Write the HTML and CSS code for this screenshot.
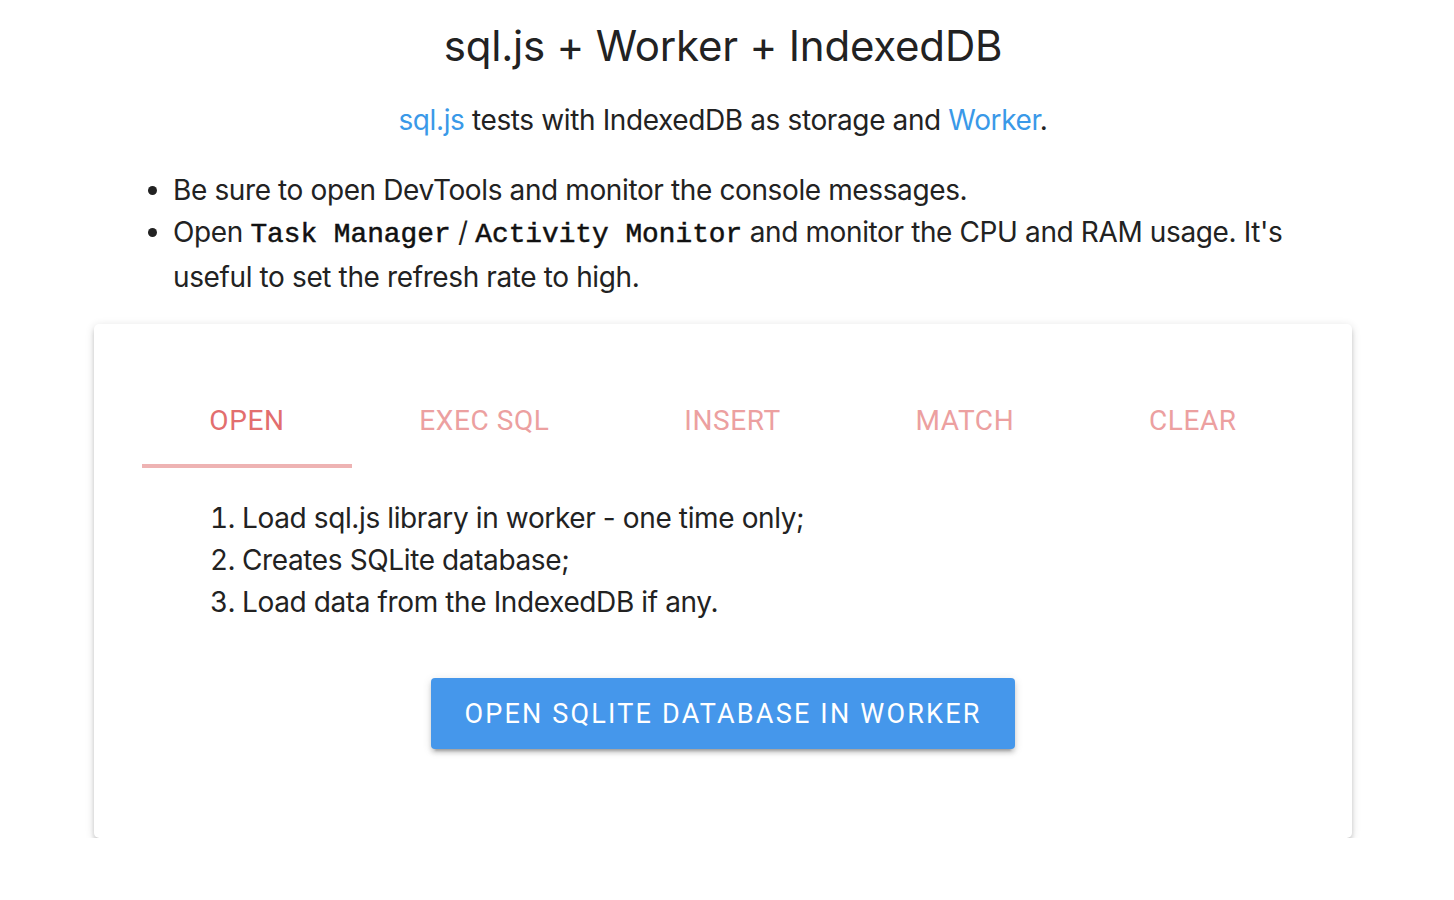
FILE: index.html
```html
<!DOCTYPE html>
<html lang="en">
<head>
<meta charset="utf-8">
<title>sql.js + Worker + IndexedDB</title>
<link rel="stylesheet" href="styles.css">
</head>
<body>
<div class="page">
  <h1 class="title">sql.js + Worker + IndexedDB</h1>
  <p class="subtitle"><a href="#" class="link">sql.js</a> tests with IndexedDB as storage and <a href="#" class="link">Worker</a>.</p>
  <ul class="notes">
    <li>Be sure to open DevTools and monitor the console messages.</li>
    <li>Open <code>Task Manager</code> / <code>Activity Monitor</code> and monitor the CPU and RAM usage. It's useful to set the refresh rate to high.</li>
  </ul>
  <div class="card">
    <div class="tabs">
      <div class="tab active">Open</div>
      <div class="tab">Exec SQL</div>
      <div class="tab">Insert</div>
      <div class="tab">Match</div>
      <div class="tab">Clear</div>
    </div>
    <div class="tab-body">
      <ol class="steps">
        <li>Load sql.js library in worker - one time only;</li>
        <li>Creates SQLite database;</li>
        <li>Load data from the IndexedDB if any.</li>
      </ol>
      <div class="actions">
        <button class="btn">Open SQLite database in worker</button>
      </div>
    </div>
  </div>
</div>
</body>
</html>
```

FILE: styles.css
```css
* { box-sizing: border-box; }
html, body { margin: 0; padding: 0; background: #fff; }
body {
  font-family: Inter, "Noto Sans", "Liberation Sans", sans-serif;
  color: #222;
  font-size: 28px;
  line-height: 42px;
  letter-spacing: -0.38px;
}
.page {
  margin: 0 102px 0 94px;
  padding-top: 20px;
}
.title {
  margin: 0;
  text-align: center;
  font-weight: 400;
  font-size: 42px;
  line-height: 52px;
  letter-spacing: -0.2px;
}
.subtitle {
  margin: 27px 0 0;
  text-align: center;
}
.link { color: #3a99e8; text-decoration: none; }
.notes {
  margin: 28px 0 0;
  padding: 0 30px 0 79px;
}
.notes li { line-height: 42px; }
code {
  font-family: "Liberation Mono", monospace;
  font-size: 27.8px;
  font-weight: 400;
  letter-spacing: 0;
  color: #111;
  -webkit-text-stroke: 0.5px #111;
}
.card {
  margin-top: 26px;
  background: #fff;
  border-radius: 5px;
  padding: 48px;
  box-shadow: 0 6px 2px -4px rgba(0,0,0,.2), 0 4px 4px 0 rgba(0,0,0,.14), 0 2px 10px 0 rgba(0,0,0,.14);
}
.tabs {
  display: flex;
  height: 96px;
}
.tab {
  flex: 1 1 auto;
  display: flex;
  align-items: center;
  justify-content: center;
  padding-top: 5px;
  font-family: Roboto, sans-serif;
  font-size: 28px;
  letter-spacing: 0.6px;
  text-transform: uppercase;
  color: #eca0a0;
  border-bottom: 4px solid transparent;
}
.tab.active {
  color: #e26e6e;
  border-bottom-color: #eeb3b3;
}
.tab-body {
  padding-top: 29px;
}
.steps {
  margin: 0;
  padding-left: 100px;
}
.steps li { line-height: 42px; }
.actions {
  display: flex;
  justify-content: center;
  margin-top: 55px;
  padding-bottom: 41px;
}
.btn {
  height: 71px;
  padding: 0 33px;
  border: none;
  border-radius: 4px;
  background: #4597eb;
  color: #fff;
  font-family: Roboto, sans-serif;
  font-size: 27px;
  letter-spacing: 2.2px;
  text-transform: uppercase;
  box-shadow: 0 6px 2px -4px rgba(0,0,0,.2), 0 4px 4px 0 rgba(0,0,0,.14), 0 2px 10px 0 rgba(0,0,0,.12);
}
```
